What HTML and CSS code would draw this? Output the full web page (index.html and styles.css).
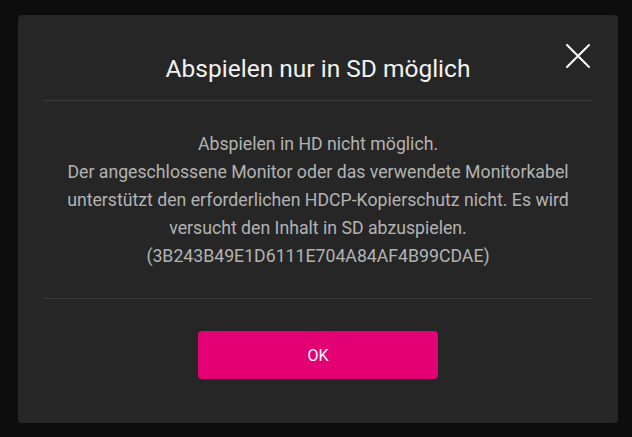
FILE: index.html
```html
<!DOCTYPE html>
<html lang="de">
<head>
<meta charset="utf-8">
<link rel="stylesheet" href="styles.css">
</head>
<body>
<div class="dialog">
  <div class="header">
    <h1 class="title">Abspielen nur in SD möglich</h1>
    <button class="close" aria-label="Schließen">
      <svg width="24" height="24" viewBox="0 0 24 24"><path d="M1 1 L23 23 M23 1 L1 23" stroke="#fff" stroke-width="2" stroke-linecap="round" fill="none"/></svg>
    </button>
  </div>
  <div class="body">
    <p class="message">Abspielen in HD nicht möglich.<br>Der angeschlossene Monitor oder das verwendete Monitorkabel unterstützt den erforderlichen HDCP-Kopierschutz nicht. Es wird versucht den Inhalt in SD abzuspielen.<br>(3B243B49E1D6111E704A84AF4B99CDAE)</p>
  </div>
  <div class="footer">
    <button class="ok">OK</button>
  </div>
</div>
</body>
</html>
```

FILE: styles.css
```css
html, body {
  margin: 0;
  height: 100%;
  background: #0d0d0d;
}
body {
  padding: 15px 14px 14px 18px;
  box-sizing: border-box;
  font-family: Roboto, "Liberation Sans", sans-serif;
}
.dialog {
  position: relative;
  width: 600px;
  height: 408px;
  background: #262626;
  border-radius: 4px;
  padding: 0 26px;
  box-sizing: border-box;
  display: flex;
  flex-direction: column;
}
.header {
  height: 86px;
  border-bottom: 1px solid #3c3c3c;
  display: flex;
  align-items: center;
  justify-content: center;
  padding-top: 22px;
  box-sizing: border-box;
}
.title {
  margin: 0;
  font-size: 24.5px;
  font-weight: 400;
  color: #f2f2f2;
}
.close {
  position: absolute;
  top: 29px;
  right: 28px;
  width: 24px;
  height: 24px;
  padding: 0;
  border: 0;
  background: none;
  display: flex;
}
.body {
  height: 197px;
  border-bottom: 1px solid #3c3c3c;
  display: flex;
  align-items: center;
  justify-content: center;
  padding: 0 10px;
}
.message {
  margin: 0;
  text-align: center;
  font-size: 17.7px;
  line-height: 28px;
  color: #b3b3b3;
}
.footer {
  flex: 1;
  display: flex;
  justify-content: center;
  padding-top: 32px;
}
.ok {
  width: 240px;
  height: 48px;
  background: #e20074;
  color: #fff;
  border: 0;
  border-radius: 4px;
  font-family: Roboto, "Liberation Sans", sans-serif;
  font-size: 16px;
}
```
